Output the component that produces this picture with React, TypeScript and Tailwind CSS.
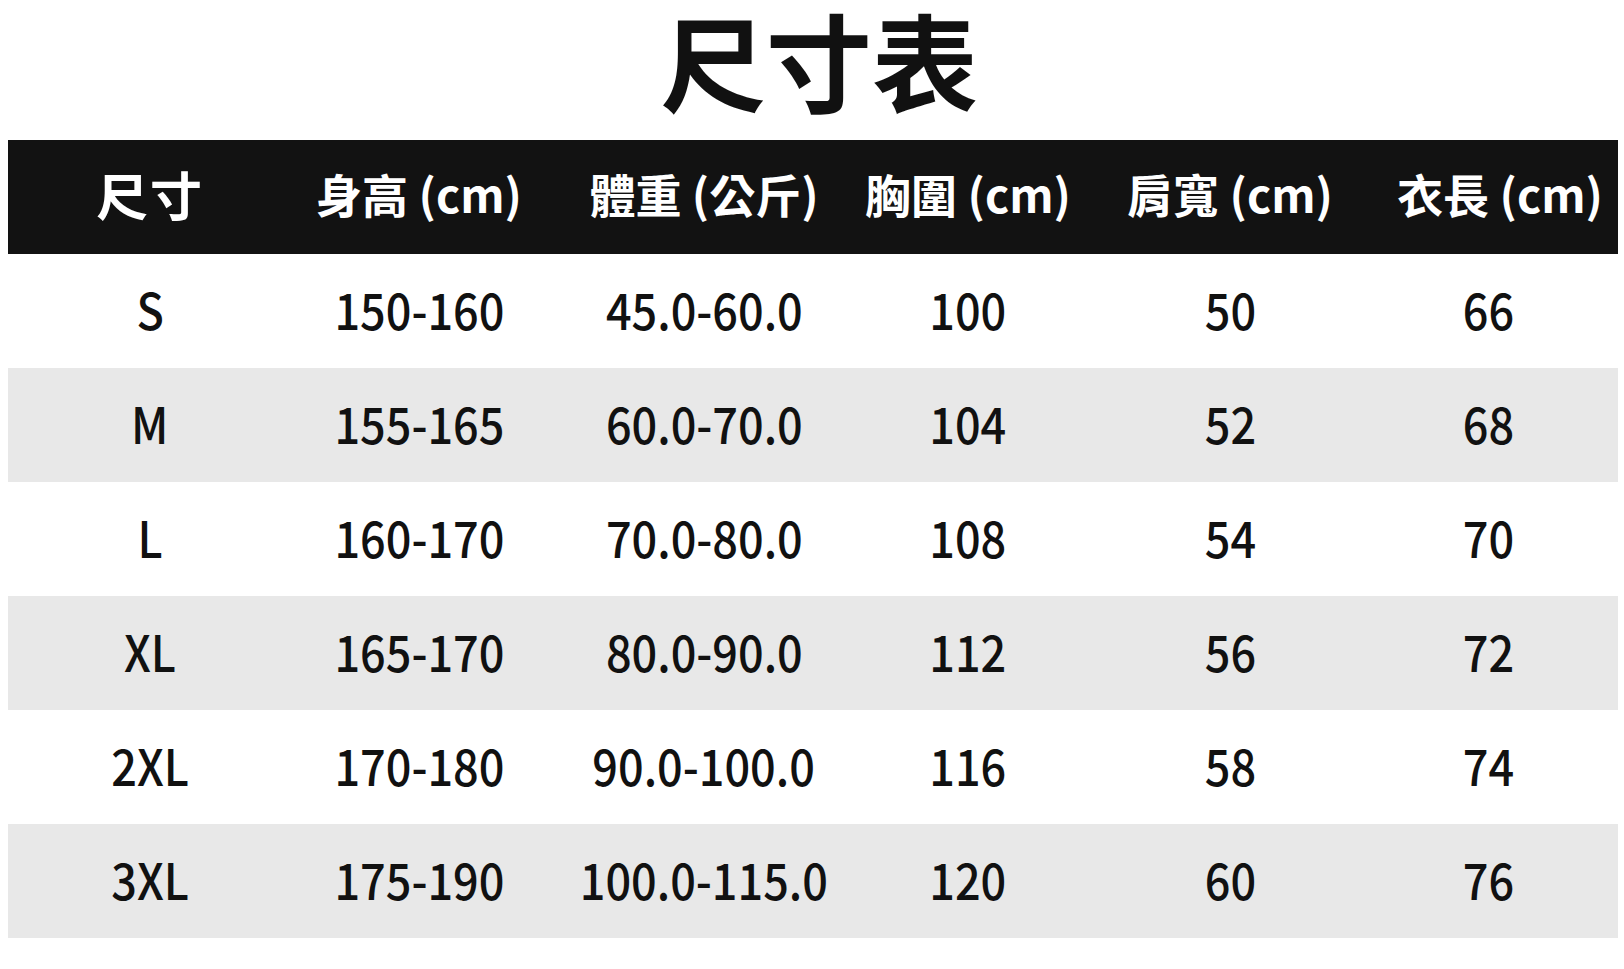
const headers = ['尺寸', '身高 (cm)', '體重 (公斤)', '胸圍 (cm)', '肩寬 (cm)', '衣長 (cm)'];

const rows = [
  ['S', '150-160', '45.0-60.0', '100', '50', '66'],
  ['M', '155-165', '60.0-70.0', '104', '52', '68'],
  ['L', '160-170', '70.0-80.0', '108', '54', '70'],
  ['XL', '165-170', '80.0-90.0', '112', '56', '72'],
  ['2XL', '170-180', '90.0-100.0', '116', '58', '74'],
  ['3XL', '175-190', '100.0-115.0', '120', '60', '76'],
];

const cjk = "font-['Noto_Sans_CJK_TC','Noto_Sans_CJK_SC',sans-serif]";

export default function App() {
  return (
    <div className={`w-[1624px] h-[969px] bg-white text-[#111] ${cjk}`}>
      <header className="h-[140px] flex justify-center pl-[14px]">
        <h1 className="text-[106px] leading-[116px] font-bold">尺寸表</h1>
      </header>
      <div className="ml-[8px] w-[1610px]">
        <div className="grid grid-cols-[284px_254px_316px_212px_312px_232px] h-[114px] bg-[#121212] text-white">
          {headers.map((h, j) => (
            <div
              key={h}
              className={`flex items-center justify-center pb-[6px] font-bold leading-[1.2] ${
                j === 0 ? 'text-[52px] tracking-[2px]' : 'text-[46px]'
              } ${j === 5 ? 'pr-[4px]' : ''}`}
            >
              {h}
            </div>
          ))}
        </div>
        {rows.map((r, i) => (
          <div
            key={r[0]}
            className={`grid grid-cols-[284px_254px_316px_212px_312px_232px] h-[114px] ${
              i % 2 === 0 ? 'bg-white' : 'bg-[#e8e8e8]'
            }`}
          >
            {r.map((c, j) => (
              <div
                key={j}
                className={`flex items-center justify-center pb-[6px] ${j === 5 ? 'pr-[28px]' : ''}`}
              >
                <span className="text-[50px] leading-[1.2] font-medium scale-x-[0.9]">{c}</span>
              </div>
            ))}
          </div>
        ))}
      </div>
    </div>
  );
}
